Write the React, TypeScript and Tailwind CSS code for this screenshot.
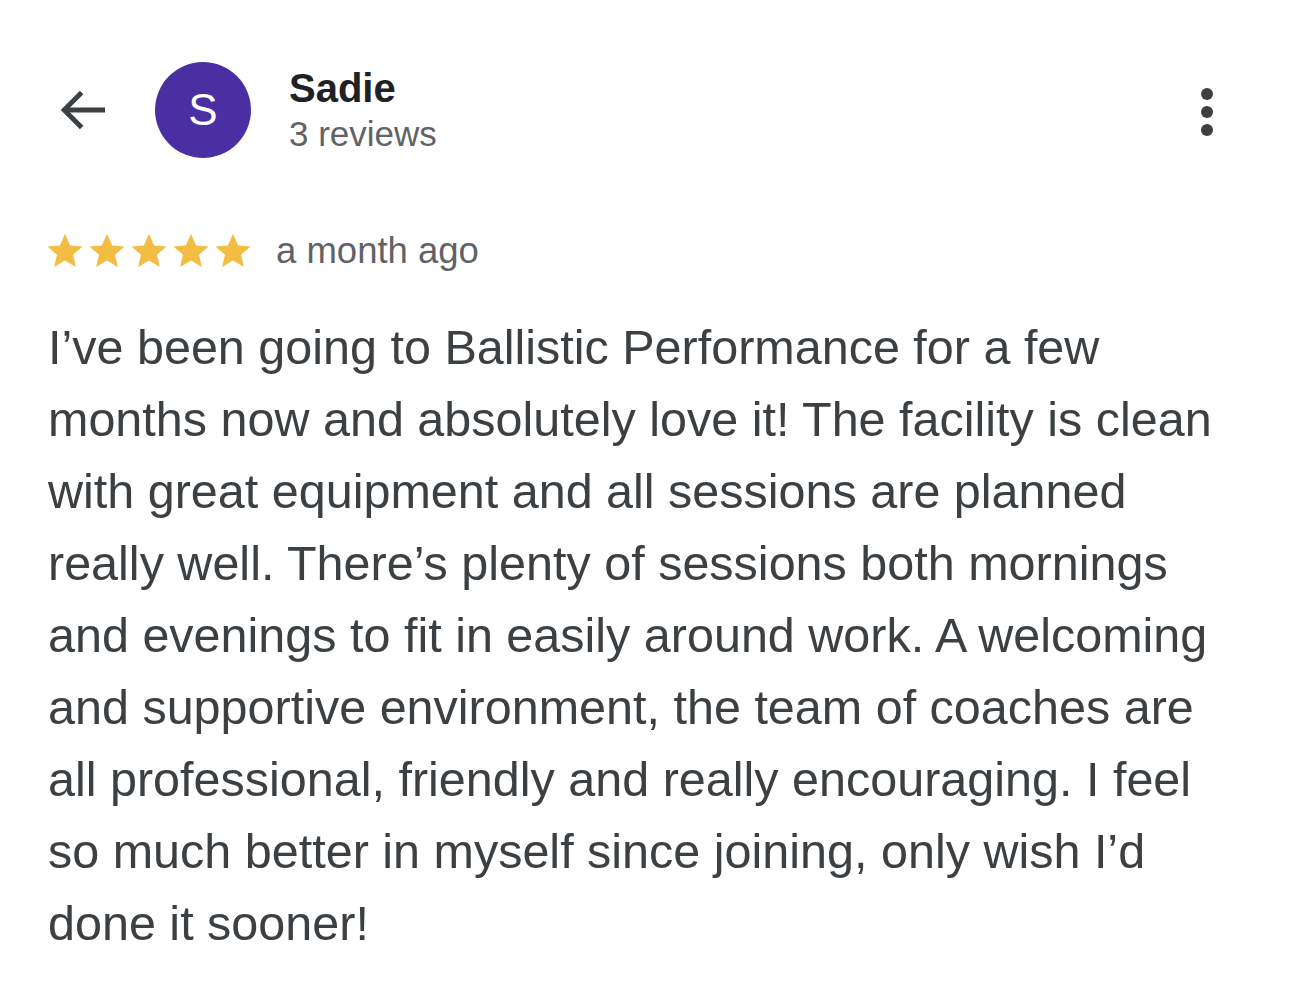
import React from 'react';

const REVIEW =
  'I’ve been going to Ballistic Performance for a few months now and absolutely love it! The facility is clean with great equipment and all sessions are planned really well. There’s plenty of sessions both mornings and evenings to fit in easily around work. A welcoming and supportive environment, the team of coaches are all professional, friendly and really encouraging. I feel so much better in myself since joining, only wish I’d done it sooner!';

function Star() {
  return (
    <svg viewBox="0 0 24 24" className="w-[42px] h-[42px]" fill="#f2bd42">
      <path d="M12 2.2l2.9 6.6 7.1.6-5.4 4.7 1.6 7-6.2-3.7-6.2 3.7 1.6-7L2 9.4l7.1-.6z" />
    </svg>
  );
}

export default function App() {
  return (
    <div
      className="min-h-screen w-[1290px] bg-white"
      style={{ fontFamily: '"Liberation Sans", Arial, sans-serif' }}
    >
      {/* ヘッダー */}
      <div className="flex items-center pl-[56px] pr-[77px] pt-[62px]">
        <svg viewBox="0 0 24 24" className="w-[56px] h-[56px]" fill="none" stroke="#3c4043" strokeWidth="2.1">
          <path d="M21 12H4" />
          <path d="M11 4.5L3.5 12l7.5 7.5" />
        </svg>
        <div className="ml-[43px] w-[96px] h-[96px] rounded-full bg-[#4a2fa3] flex items-center justify-center text-white text-[44px]">
          S
        </div>
        <div className="ml-[38px] flex flex-col">
          <span className="text-[40px] font-bold text-[#202124] leading-[48px]">Sadie</span>
          <span className="text-[35px] text-[#5f6368] leading-[44px]">3 reviews</span>
        </div>
        <div className="ml-auto mt-[4px] flex flex-col gap-[6px]">
          <span className="w-[12px] h-[12px] rounded-full bg-[#3c4043]" />
          <span className="w-[12px] h-[12px] rounded-full bg-[#3c4043]" />
          <span className="w-[12px] h-[12px] rounded-full bg-[#3c4043]" />
        </div>
      </div>

      {/* 評価 */}
      <div className="flex items-center pl-[44px] mt-[66px]">
        <div className="flex">
          <Star />
          <Star />
          <Star />
          <Star />
          <Star />
        </div>
        <span className="ml-[22px] text-[36.5px] text-[#5f6368]">a month ago</span>
      </div>

      {/* 本文 */}
      <p className="ml-[48px] w-[1188px] mt-[32px] text-[48.5px] leading-[72px] text-[#3c4043]">{REVIEW}</p>
    </div>
  );
}
